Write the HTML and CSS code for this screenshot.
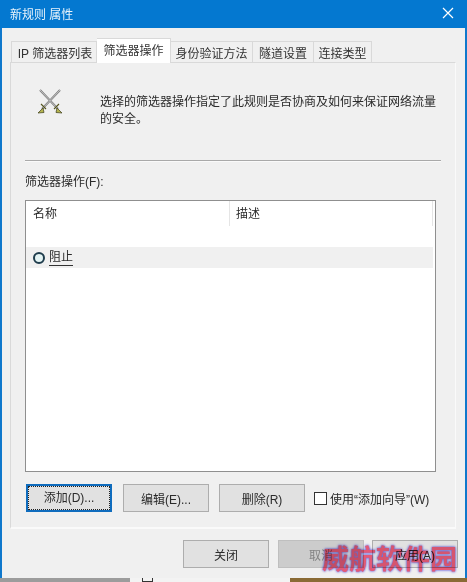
FILE: index.html
```html
<!DOCTYPE html>
<html lang="zh-CN">
<head>
    <meta charset="UTF-8">
    <title>新规则 属性</title>
    <link rel="stylesheet" href="styles.css">
</head>
<body>
    <div class="dialog">
        <div class="titlebar">
            <span>新规则 属性</span>
            <svg class="close" width="12" height="12" viewBox="0 0 12 12"><path d="M1 1L11 11M11 1L1 11" stroke="#fff" stroke-width="1.2" fill="none"/></svg>
        </div>
        <div class="content">
            <div class="tabs">
                <div class="tab tab-first">IP 筛选器列表</div>
                <div class="tab active">筛选器操作</div>
                <div class="tab tab-auth">身份验证方法</div>
                <div class="tab tab-tunnel">隧道设置</div>
                <div class="tab tab-conn">连接类型</div>
            </div>
            <div class="panel">
                <div class="intro">
                    <svg class="swords" width="26" height="25" viewBox="0 0 26 25">
                        <path d="M3 1L21 20M23 1L5 20" stroke="#7c7c7c" stroke-width="2" fill="none"/>
                        <path d="M3 1L21 20M23 1L5 20" stroke="#f2f2f2" stroke-width="0.6" fill="none"/>
                        <path d="M17 20L22 15M9 20L4 15" stroke="#55551f" stroke-width="1.1" fill="none"/>
                        <path d="M20 19L25 24L19 23.5ZM6 19L1 24L7 23.5Z" fill="#b4b44e" stroke="#3c3c1a" stroke-width="0.7"/>
                    </svg>
                    <p>选择的筛选器操作指定了此规则是否协商及如何来保证网络流量的安全。</p>
                </div>
                <div class="rule"></div>
                <div class="list-label">筛选器操作(F):</div>
                <div class="list">
                    <div class="list-head">
                        <div class="col-name">名称</div>
                        <div class="col-desc">描述</div>
                    </div>
                    <div class="list-row">
                        <span class="radio"></span>
                        <span class="row-name">阻止</span>
                    </div>
                </div>
                <div class="actions">
                    <button class="btn focused"><span>添加(D)...</span></button>
                    <button class="btn btn-edit">编辑(E)...</button>
                    <button class="btn btn-delete">删除(R)</button>
                    <label class="wizard"><span class="checkbox"></span>使用“添加向导”(W)</label>
                </div>
            </div>
            <div class="footer">
                <button class="btn">关闭</button>
                <button class="btn disabled">取消</button>
                <button class="btn">应用(A)</button>
            </div>
        </div>
    </div>
    <div class="desktop">
        <div class="desk-gray"></div>
        <div class="desk-white"><span class="desk-box"></span></div>
        <div class="desk-brown"></div>
    </div>
    <div class="watermark">威航软件园</div>
</body>
</html>
```

FILE: styles.css
```css
html, body {
    margin: 0;
    padding: 0;
}
body {
    position: relative;
    width: 467px;
    height: 582px;
    overflow: hidden;
    font-family: "Liberation Sans", "Noto Sans CJK SC", sans-serif;
    font-size: 12px;
    color: #2a2a2a;
    background: #fff;
}
.dialog {
    width: 467px;
    height: 578px;
    box-sizing: border-box;
    border: 2px solid #0f78cc;
    border-top: 0;
    border-bottom: 0;
    background: #f0f0f0;
    display: flex;
    flex-direction: column;
}
.titlebar {
    height: 28px;
    margin: 0 -2px;
    padding: 0 13px 2px 10px;
    box-sizing: border-box;
    background: #0478d0;
    color: #e8f3fb;
    display: flex;
    align-items: center;
    justify-content: space-between;
    flex: none;
}
.content {
    flex: 1;
    padding: 10px 9px 0 8px;
    display: flex;
    flex-direction: column;
}
.tabs {
    display: flex;
    align-items: flex-end;
    height: 24px;
    padding-left: 1px;
    flex: none;
}
.tab {
    height: 21px;
    box-sizing: border-box;
    border: 1px solid #d9d9d9;
    border-bottom: 0;
    border-left: 0;
    background: #f0f0f0;
    display: flex;
    align-items: center;
    justify-content: center;
    color: #333;
}
.tab-first {
    width: 86px;
    padding-left: 2px;
    border-left: 1px solid #d9d9d9;
}
.active {
    width: 74px;
    height: 25px;
    background: #fff;
    position: relative;
    top: 1px;
    padding-bottom: 3px;
}
.tab-auth {
    width: 82px;
}
.tab-tunnel {
    width: 61px;
}
.tab-conn {
    width: 58px;
}
.panel {
    height: 467px;
    flex: none;
    box-sizing: border-box;
    border: 1px solid #d9d9d9;
    border-bottom: 2px solid #fafafa;
    border-right-color: #fafafa;
    background: #f0f0f0;
    padding: 0 14px;
    display: flex;
    flex-direction: column;
}
.intro {
    height: 97px;
    padding-left: 12px;
    display: flex;
    flex: none;
    box-sizing: border-box;
}
.swords {
    margin-top: 26px;
    flex: none;
}
.intro p {
    margin: 31px 0 0 37px;
    width: 340px;
    line-height: 17px;
}
.rule {
    height: 1px;
    width: 416px;
    flex: none;
    background: #a9a9a9;
    border-bottom: 1px solid #fafafa;
}
.list-label {
    margin-top: 10px;
    height: 18px;
    line-height: 20px;
    flex: none;
}
.list {
    margin-top: 10px;
    height: 272px;
    width: 411px;
    box-sizing: border-box;
    border: 1px solid #8f8f8f;
    background: #fff;
    flex: none;
}
.list-head {
    height: 25px;
    display: flex;
    line-height: 26px;
}
.col-name {
    width: 196px;
    padding-left: 7px;
    border-right: 1px solid #e5e5e5;
}
.col-desc {
    flex: 1;
    padding-left: 6px;
    margin-right: 2px;
    border-right: 1px solid #e5e5e5;
}
.list-row {
    margin-top: 21px;
    height: 21px;
    width: 407px;
    background: #f0f0f0;
    display: flex;
    align-items: center;
    padding-left: 7px;
    box-sizing: border-box;
}
.radio {
    width: 12px;
    height: 12px;
    box-sizing: border-box;
    border: 2px solid #1f3d4d;
    border-radius: 50%;
    background: #e4f4f4;
    margin-right: 4px;
}
.row-name {
    border-bottom: 1px solid #333;
    line-height: 15px;
}
.actions {
    margin-top: 12px;
    display: flex;
    align-items: center;
    padding-left: 1px;
    flex: none;
}
.btn {
    width: 86px;
    height: 28px;
    box-sizing: border-box;
    border: 1px solid #adadad;
    background: #e1e1e1;
    font-family: inherit;
    font-size: 12px;
    color: #2a2a2a;
    padding: 0;
    margin: 0;
}
.btn-edit {
    margin-left: 11px;
}
.btn-delete {
    margin-left: 10px;
}
.focused {
    border: 2px solid #0f6cbd;
}
.focused span {
    display: block;
    height: 100%;
    line-height: 22px;
    border: 1px dotted #222;
    box-sizing: border-box;
}
.wizard {
    margin-left: 9px;
    display: flex;
    align-items: center;
    white-space: nowrap;
}
.checkbox {
    width: 13px;
    height: 13px;
    box-sizing: border-box;
    border: 1px solid #333;
    background: #fff;
    margin-right: 3px;
}
.footer {
    margin-top: 11px;
    margin-right: -2px;
    display: flex;
    justify-content: flex-end;
    gap: 9px;
    flex: none;
}
.disabled {
    margin-right: -1px;
    background: #cccccc;
    border-color: #bfbfbf;
    color: #838383;
}
.desktop {
    height: 4px;
    display: flex;
}
.desk-gray {
    width: 130px;
    background: #9c9c9c;
}
.desk-white {
    width: 160px;
    background: #f3f3f3;
    padding-left: 12px;
    box-sizing: border-box;
}
.desk-box {
    display: block;
    width: 11px;
    height: 4px;
    box-sizing: border-box;
    border: 1px solid #333;
    border-top: 0;
}
.desk-brown {
    flex: 1;
    background: #8a6a35;
}
.watermark {
    position: absolute;
    left: 322px;
    top: 542px;
    font-family: "Noto Sans CJK SC", sans-serif;
    font-size: 27px;
    font-weight: 700;
    line-height: 32px;
    white-space: nowrap;
    color: #f2607f;
    mix-blend-mode: multiply;
    text-shadow: 0 0 3px #7a70e8, 0 0 2px #7a70e8;
}
```
